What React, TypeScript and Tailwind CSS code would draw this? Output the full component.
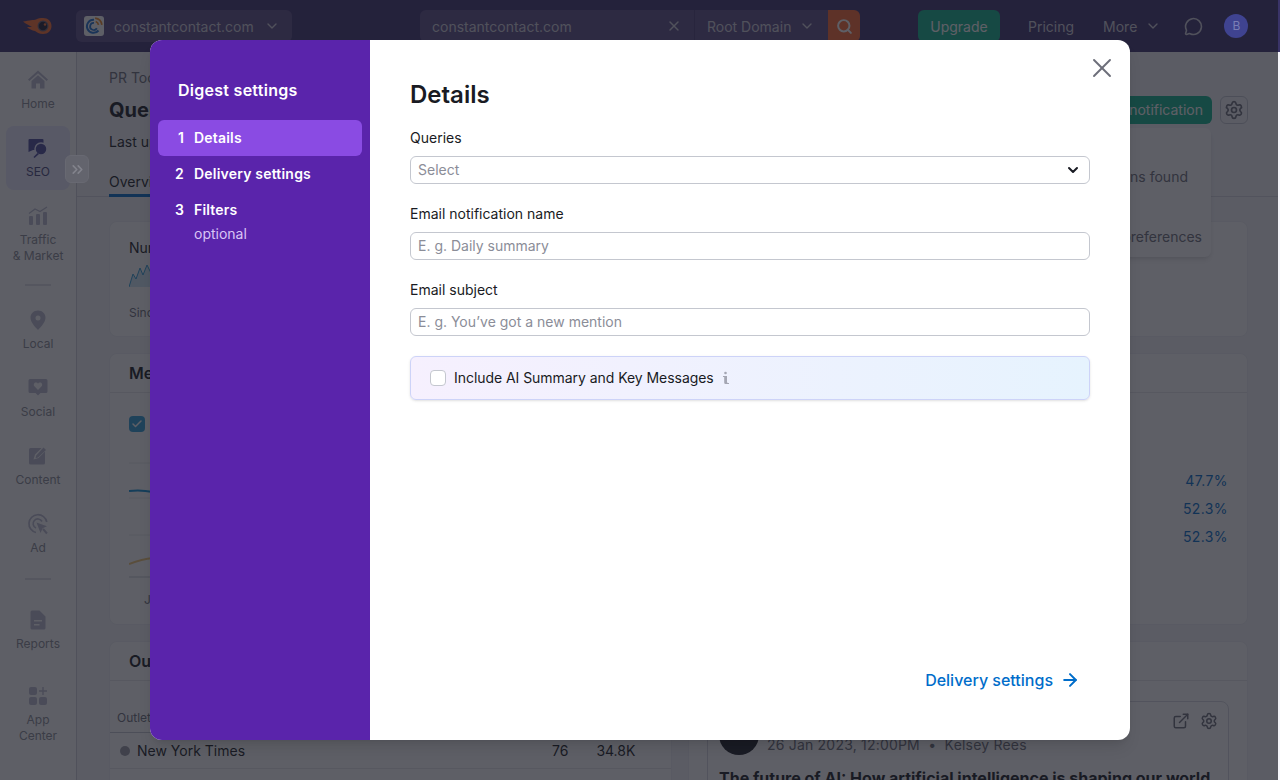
import { ChevronDown, MessageCircle, Search, Settings, X, ArrowRight, ExternalLink, ChevronsRight, Check } from "lucide-react";

const font = { fontFamily: "Inter, 'Noto Sans', sans-serif" };

function HomeIcon() {
  return (
    <svg width="20" height="20" viewBox="0 0 20 20" fill="currentColor">
      <path d="M10 0.500 L20 9.500 L18.700 11 L10 3.200 L1.300 11 L0 9.500 Z" />
      <path d="M3.500 11 L10 5.200 L16.500 11 V18.500 H12 V13.500 H8 V18.500 H3.500 Z" />
    </svg>
  );
}

function SeoIcon() {
  return (
    <svg width="20" height="20" viewBox="0 0 20 20" fill="currentColor">
      <path d="M0.500 2 A1 1 0 0 1 1.500 1 H14.500 A1 1 0 0 1 15.500 2 V12 H5 L0.500 14 Z" />
      <circle cx="13" cy="11" r="6" stroke="#e9e9ff" strokeWidth="1.500" />
      <path d="M9.500 15 L5.500 19 L6.500 20 L11 16 Z" />
    </svg>
  );
}

function TrafficIcon() {
  return (
    <svg width="20" height="20" viewBox="0 0 20 20" fill="currentColor">
      <rect x="1" y="10" width="4" height="9" rx="1" />
      <rect x="8" y="8" width="4" height="11" rx="1" />
      <rect x="15" y="6" width="4" height="13" rx="1" />
      <path d="M1 7.500 L7 3 L12 5.500 L19 1" fill="none" stroke="currentColor" strokeWidth="1.300" />
    </svg>
  );
}

function PinIcon() {
  return (
    <svg width="20" height="20" viewBox="0 0 20 20" fill="currentColor">
      <path fillRule="evenodd" d="M10 0.500 C5.400 0.500 2.500 3.800 2.500 7.800 C2.500 12 6.500 16.500 10 20 C13.500 16.500 17.500 12 17.500 7.800 C17.500 3.800 14.600 0.500 10 0.500 Z M10 5.500 A2.500 2.500 0 1 1 10 10.500 A2.500 2.500 0 1 1 10 5.500 Z" />
    </svg>
  );
}

function SocialIcon() {
  return (
    <svg width="20" height="20" viewBox="0 0 20 20" fill="currentColor">
      <path fillRule="evenodd" d="M2 1 H18 A1.500 1.500 0 0 1 19.500 2.500 V13.500 A1.500 1.500 0 0 1 18 15 H12.500 L10 17.500 L7.500 15 H2 A1.500 1.500 0 0 1 0.500 13.500 V2.500 A1.500 1.500 0 0 1 2 1 Z M10 12 L13.600 8.300 C15 6.500 13.600 4.300 11.800 4.500 C11 4.600 10.400 5 10 5.700 C9.600 5 9 4.600 8.200 4.500 C6.400 4.300 5 6.500 6.400 8.300 Z" />
    </svg>
  );
}

function ContentIcon() {
  return (
    <svg width="20" height="20" viewBox="0 0 20 20" fill="currentColor">
      <path d="M2.500 2 H13.500 L7 8.500 L5.500 13.500 L10.500 12 L17 5.500 V17 A1.500 1.500 0 0 1 15.500 18.500 H2.500 A1.500 1.500 0 0 1 1 17 V3.500 A1.500 1.500 0 0 1 2.500 2 Z" />
      <path d="M15.500 1.500 L18 4 L10 11.500 L7.500 12.300 L8.200 9.500 Z" />
    </svg>
  );
}

function AdIcon() {
  return (
    <svg width="22" height="22" viewBox="0 0 22 22" fill="none" stroke="currentColor" strokeWidth="1.700">
      <path d="M9 19.500 A9 9 0 1 1 19.800 9" />
      <path d="M9 15 A4.700 4.700 0 1 1 15 8.500" />
      <path d="M9.500 9.500 L20 13.300 L15.700 15.300 L13.500 20 Z" fill="currentColor" stroke="none" />
      <path d="M16 16 L20 20.500" strokeWidth="2" />
    </svg>
  );
}

function ReportsIcon() {
  return (
    <svg width="20" height="20" viewBox="0 0 20 20" fill="currentColor">
      <path fillRule="evenodd" d="M4 0.500 H11.500 L17.500 6.500 V18 A1.500 1.500 0 0 1 16 19.500 H4 A1.500 1.500 0 0 1 2.500 18 V2 A1.500 1.500 0 0 1 4 0.500 Z M6 10 V11.500 H14 V10 Z M6 14 V15.500 H11.500 V14 Z" />
    </svg>
  );
}

function AppIcon() {
  return (
    <svg width="20" height="20" viewBox="0 0 20 20" fill="currentColor">
      <rect x="1" y="1" width="8" height="8" rx="2" />
      <rect x="1" y="11" width="8" height="8" rx="2" />
      <rect x="11" y="11" width="8" height="8" rx="2" />
      <path d="M14.300 1 H15.700 V4.300 H19 V5.700 H15.700 V9 H14.300 V5.700 H11 V4.300 H14.300 Z" />
    </svg>
  );
}

function Logo() {
  return (
    <svg width="30" height="18" viewBox="0 0 30 18">
      <path d="M0 4.500 C6 3.500 11 3 13 2.500 C15 1 17.500 1 20 1 C25 1 28.500 4.500 28.500 9 C28.500 13.500 25 17 20 17 C16 17 14 15.500 12 14 C9 13.500 6 12 4 10 C6 10 8 10 9 9.500 C6 8.500 3 7 0 4.500 Z" fill="#ff702d" />
      <circle cx="20" cy="9" r="5.500" fill="#6a6070" />
      <circle cx="20" cy="9" r="4.300" fill="#201c30" />
      <circle cx="22" cy="7.500" r="1.200" fill="#ff702d" />
    </svg>
  );
}

function Favicon() {
  return (
    <div className="w-5 h-5 rounded-[3px] bg-white flex items-center justify-center">
      <svg width="18" height="18" viewBox="0 0 16 16" fill="none">
        <path d="M12 12 A5.800 5.800 0 1 1 8 2.500" stroke="#1d6fd0" strokeWidth="1.800" />
        <path d="M10.500 10 A3.200 3.200 0 1 1 8 5.200" stroke="#1d6fd0" strokeWidth="1.600" />
        <path d="M9 1 A7 7 0 0 1 15 7" stroke="#f08a24" strokeWidth="1.500" />
        <path d="M9.500 4 A4 4 0 0 1 12 7" stroke="#f08a24" strokeWidth="1.500" />
      </svg>
    </div>
  );
}

const navTop = [
  { label: ["Home"], icon: HomeIcon },
  { label: ["SEO"], icon: SeoIcon, active: true },
  { label: ["Traffic", "& Market"], icon: TrafficIcon },
];
const navMid = [
  { label: ["Local"], icon: PinIcon },
  { label: ["Social"], icon: SocialIcon },
  { label: ["Content"], icon: ContentIcon },
  { label: ["Ad"], icon: AdIcon },
];
const navBottom = [
  { label: ["Reports"], icon: ReportsIcon },
  { label: ["App", "Center"], icon: AppIcon },
];

function NavItem({ item }: { item: { label: string[]; icon: () => React.ReactNode; active?: boolean } }) {
  const Icon = item.icon;
  return (
    <div className={`w-16 mx-auto rounded-lg pt-3 pb-2 min-h-16 flex flex-col items-center text-[12px] leading-4 ${item.active ? "bg-[#e9e9ff] text-[#46467a]" : "text-[#8a8c96]"}`}>
      <div className={`h-5 flex items-center justify-center ${item.active ? "text-[#4a4a9c]" : "text-[#bcbdd0]"}`}>
        <Icon />
      </div>
      <div className="mt-[6px] text-center">
        {item.label.map((l) => (
          <div key={l}>{l}</div>
        ))}
      </div>
    </div>
  );
}

function Sidebar() {
  return (
    <aside className="relative w-[77px] shrink-0 bg-white border-r border-[#cfd1da] pt-[6px] h-full">
      <div className="flex flex-col gap-1">
        {navTop.map((i) => (
          <NavItem key={i.label[0]} item={i} />
        ))}
      </div>
      <div className="w-[26px] h-[2px] bg-[#dfe0e8] mx-auto my-3" />
      <div className="flex flex-col gap-1">
        {navMid.map((i) => (
          <NavItem key={i.label[0]} item={i} />
        ))}
      </div>
      <div className="w-[26px] h-[2px] bg-[#dfe0e8] mx-auto mt-3 mb-[18px]" />
      <div className="flex flex-col gap-3">
        {navBottom.map((i) => (
          <NavItem key={i.label[0]} item={i} />
        ))}
      </div>
      <div className="absolute z-10 left-[65px] top-[103px] w-6 h-7 rounded-md bg-[#63646d] border border-[#686972] flex items-center justify-center text-[#82838c]">
        <ChevronsRight size={17} strokeWidth={2.400} />
      </div>
    </aside>
  );
}

function Header() {
  return (
    <header className="h-[52px] bg-[#3f3270] flex items-center text-[14px] text-[#d0d0da]">
      <div className="w-[76px] pl-[23px]">
        <Logo />
      </div>
      <div className="w-[216px] h-8 rounded-md bg-[#5d4e88] flex items-center pl-2 pr-3">
        <Favicon />
        <span className="ml-[10px] flex-1">constantcontact.com</span>
        <ChevronDown size={16} />
      </div>
      <div className="ml-[128px] w-[440px] h-8 flex items-center">
        <div className="flex-1 h-full rounded-l-md bg-[#5d4e88] flex items-center pl-3 pr-[12px]">
          <span className="flex-1">constantcontact.com</span>
          <X size={16} />
        </div>
        <div className="w-[134px] h-full bg-[#5d4e88] border-l border-[#4a3d75] flex items-center pl-3 pr-[13px]">
          <span className="flex-1">Root Domain</span>
          <ChevronDown size={16} />
        </div>
        <div className="w-8 h-full rounded-r-md bg-[#ff6a30] flex items-center justify-center text-white">
          <Search size={17} strokeWidth={2.800} />
        </div>
      </div>
      <div className="ml-[58px] w-[82px] h-8 rounded-md bg-[#0fb58c] text-white flex items-center justify-center">Upgrade</div>
      <span className="ml-7">Pricing</span>
      <span className="ml-[29px]">More</span>
      <ChevronDown size={16} className="ml-2" />
      <MessageCircle size={19} className="ml-[23px]" />
      <div className="relative z-10 ml-[21px] w-6 h-6 rounded-full bg-[#3f4390] flex items-center justify-center text-[12px] text-[#7a7eb5]">B</div>
    </header>
  );
}

function SummaryCard() {
  return (
    <section className="mt-6 h-[116px] rounded-lg bg-white border border-[#eeeff3] pl-[19px] pt-4">
      <div className="text-[14px] leading-5 text-[#191b23]">Number of mentions</div>
      <svg width="60" height="26" viewBox="0 0 60 26" className="mt-1 block" fill="none">
        <path d="M0 25 L4 12 L7 17 L11 6 L14 13 L18 3 L22 11 L26 8 V25 Z" fill="#cfe6f6" />
        <path d="M0 25 L4 12 L7 17 L11 6 L14 13 L18 3 L22 11 L26 8" stroke="#2e9ed6" />
      </svg>
      <div className="mt-[17px] text-[12px] leading-4 text-[#6c6e79]">Since last week</div>
    </section>
  );
}

function ChartCard() {
  return (
    <section className="mt-4 h-[272px] rounded-lg bg-white border border-[#eeeff3]">
      <div className="h-[39px] border-b border-[#e6e7ec] pl-[19px] flex items-center text-[16px] font-semibold text-[#191b23]">Mentions over time</div>
      <div className="flex justify-between pl-[19px] pr-[19px]">
        <div className="pt-[23px]">
          <div className="w-4 h-4 rounded bg-[#2e9ed6] flex items-center justify-center text-white">
            <Check size={12} strokeWidth={3} />
          </div>
          <svg width="400" height="134" viewBox="0 0 400 134" className="mt-[20px] block" fill="none">
            <path d="M0 11 H400 M0 46 H400 M0 83 H400" stroke="#e6e7ec" />
            <path d="M0 125 H400" stroke="#c4c7cf" />
            <path d="M0 39 C8 38 14 38 24 40 C80 44 200 30 400 40" stroke="#0a8fd6" strokeWidth="2" />
            <path d="M0 112 C8 109 14 107 24 106 C80 104 200 110 400 100" stroke="#f0c674" strokeWidth="2" />
          </svg>
          <div className="mt-[6px] pl-[15px] text-[12px] leading-4 text-[#6c6e79]">Jan</div>
        </div>
        <div className="pt-[74px] text-right text-[14px] leading-7 tracking-[0.4px] text-[#006dca]">
          <div>47.7%</div>
          <div>52.3%</div>
          <div>52.3%</div>
        </div>
      </div>
    </section>
  );
}

function BottomCards() {
  return (
    <div className="mt-4 grid grid-cols-[563px_560px] gap-4">
      <section className="rounded-lg bg-white border border-[#eeeff3] h-[200px]">
        <div className="h-[39px] border-b border-[#e6e7ec] pl-[19px] flex items-center text-[16px] font-semibold text-[#191b23]">Outlets</div>
        <div className="h-[52px] border-b border-[#c4c7cf] pl-[7px] pb-[6px] flex items-end text-[12px] leading-4 text-[#6c6e79]">Outlet</div>
        <div className="h-9 border-b border-[#e6e7ec] pl-[10px] flex items-center text-[14px] text-[#191b23]">
          <div className="w-[10px] h-[10px] rounded-full bg-[#9a9ca6]" />
          <span className="ml-[7px] w-[415px]">New York Times</span>
          <span>76</span>
          <span className="ml-7">34.8K</span>
        </div>
      </section>
      <section className="rounded-lg bg-white border border-[#eeeff3] h-[200px]">
        <div className="h-[39px] border-b border-[#e6e7ec]" />
        <div className="mx-[18px] mt-5 h-[140px] rounded-lg border border-[#d6d8e0] relative pl-[11px] pt-[7px]">
          <div className="flex items-end">
            <div className="w-10 h-10 rounded-full bg-[#191b23] mt-[6px]" />
            <div className="ml-2 text-[14px] leading-5 tracking-[0.2px] text-[#6c6e79]">26 Jan 2023, 12:00PM&nbsp; •&nbsp; Kelsey Rees</div>
          </div>
          <div className="mt-[13px] text-[16px] leading-5 font-bold text-[#191b23] whitespace-nowrap">The future of AI: How artificial intelligence is shaping our world</div>
          <div className="absolute right-[10px] top-[10px] flex gap-[10px] text-[#6c6e79]">
            <ExternalLink size={18} />
            <Settings size={18} />
          </div>
        </div>
      </section>
    </div>
  );
}

function Page() {
  return (
    <main className="flex-1 min-w-0 h-full overflow-hidden bg-[#f4f5f9] pt-4">
      <div className="pl-8 pr-8 border-b border-[#d6d8e0] h-[129px] relative">
        <div className="text-[14px] leading-5 text-[#6c6e79]">PR Toolkit</div>
        <div className="mt-2 h-7 flex items-center justify-between">
          <div className="text-[20px] font-bold text-[#191b23]">Queries</div>
          <div className="flex gap-2">
            <div className="h-7 px-[9px] pb-[2px] rounded-md bg-[#0fb58c] text-white text-[14px] flex items-center">Add email notification</div>
            <div className="w-7 h-7 rounded-md border border-[#c4c7cf] flex items-center justify-center text-[#6c6e79]">
              <Settings size={20} />
            </div>
          </div>
        </div>
        <div className="mt-2 text-[14px] leading-5 text-[#191b23]">Last updated today</div>
        <div className="mt-5 w-[62px] h-[25px] border-b-[3px] border-[#006dca] text-[14px] leading-5 text-[#191b23]">Overview</div>
        <div className="absolute right-[69px] top-[60px] w-[280px] h-[129px] rounded-md bg-white shadow-md flex flex-col items-end text-[14px] leading-5 text-[#6c6e79]">
          <div className="mt-[39px] mr-[23px]">Mentions found</div>
          <div className="mt-10 mr-[9px]">Notification preferences</div>
        </div>
      </div>
      <div className="px-8">
        <SummaryCard />
        <ChartCard />
        <BottomCards />
      </div>
    </main>
  );
}

function Field({ label, placeholder }: { label: string; placeholder: string }) {
  return (
    <div className="mt-5">
      <div className="text-[14px] leading-5 text-[#191b23] mb-2">{label}</div>
      <input
        placeholder={placeholder}
        className="block w-full h-7 rounded-md border border-[#c4c7cf] pl-[7px] pr-2 pb-[2px] text-[14px] text-[#191b23] placeholder:text-[#8b8d98] outline-none"
      />
    </div>
  );
}

function Step({ n, label }: { n: number; label: string }) {
  return (
    <div className={`h-9 pb-[2px] rounded-md flex items-center text-[14px] font-semibold tracking-[0.2px] ${n === 1 ? "bg-[#8a4be3]" : ""}`}>
      <span className="w-[26px] text-right">{n}</span>
      <span className="ml-[10px]">{label}</span>
    </div>
  );
}

function Modal() {
  return (
    <div className="absolute left-[150px] top-10 w-[980px] h-[700px] rounded-xl overflow-hidden bg-white flex shadow-lg">
      <div className="w-[220px] shrink-0 bg-[#5a24ab] text-white px-2 pt-10">
        <div className="pl-5 h-5 text-[16px] leading-5 font-semibold tracking-[0.27px] mb-5">Digest settings</div>
        <Step n={1} label="Details" />
        <Step n={2} label="Delivery settings" />
        <Step n={3} label="Filters" />
        <div className="pl-9 text-[14px] leading-3 text-[#d9c4f5]">optional</div>
      </div>
      <div className="relative flex-1 flex flex-col px-10 pt-[41px] pb-12">
        <h2 className="text-[24px] leading-7 font-semibold text-[#191b23]">Details</h2>
        <div className="mt-[19px]">
          <div className="text-[14px] leading-5 text-[#191b23] mb-2">Queries</div>
          <div className="h-7 pb-[2px] rounded-md border border-[#c4c7cf] pl-[7px] pr-2 flex items-center justify-between text-[14px] text-[#8b8d98]">
            <span>Select</span>
            <ChevronDown size={16} strokeWidth={3} className="text-[#191b23] mt-[2px]" />
          </div>
        </div>
        <Field label="Email notification name" placeholder="E. g. Daily summary" />
        <Field label="Email subject" placeholder="E. g. You’ve got a new mention" />
        <div className="mt-5 h-11 rounded-md border border-[#cdd3f8] bg-gradient-to-r from-[#f6f0fe] to-[#e6f3fe] shadow-sm flex items-center pl-[19px] text-[14px] text-[#191b23]">
          <div className="w-4 h-4 rounded bg-white border border-[#c4c7cf]" />
          <span className="ml-2 pb-[2px] tracking-[-0.05px]">Include AI Summary and Key Messages</span>
          <svg width="8" height="14" viewBox="0 0 8 14" className="ml-2" fill="#a4a6b3">
            <circle cx="3.500" cy="2" r="1.300" />
            <path d="M1 5 H5 V11 C5 11.800 5.500 12 7 12 V13 H3.500 C2.300 13 2.200 12 2.200 11 V6 H1 Z" />
          </svg>
        </div>
        <div className="mt-auto ml-auto mr-[10px] h-6 flex items-center text-[16px] font-medium text-[#006dca]">
          <span>Delivery settings</span>
          <ArrowRight size={20} strokeWidth={2.400} className="ml-[7px]" />
        </div>
        <X size={32} strokeWidth={1.400} className="absolute right-3 top-3 text-[#6c6e79]" />
      </div>
    </div>
  );
}

export default function App() {
  return (
    <div className="relative w-[1280px] h-[780px] overflow-hidden" style={font}>
      <Header />
      <div className="flex h-[728px]">
        <Sidebar />
        <Page />
      </div>
      <div className="absolute inset-0 bg-[#191b25]/70" />
      <div className="absolute right-0 top-[52px] bottom-0 w-[2px] bg-[#f6f6fb]" />
      <div className="absolute right-0 top-0 h-[52px] w-[2px] bg-[#3a3468]" />
      <Modal />
    </div>
  );
}
